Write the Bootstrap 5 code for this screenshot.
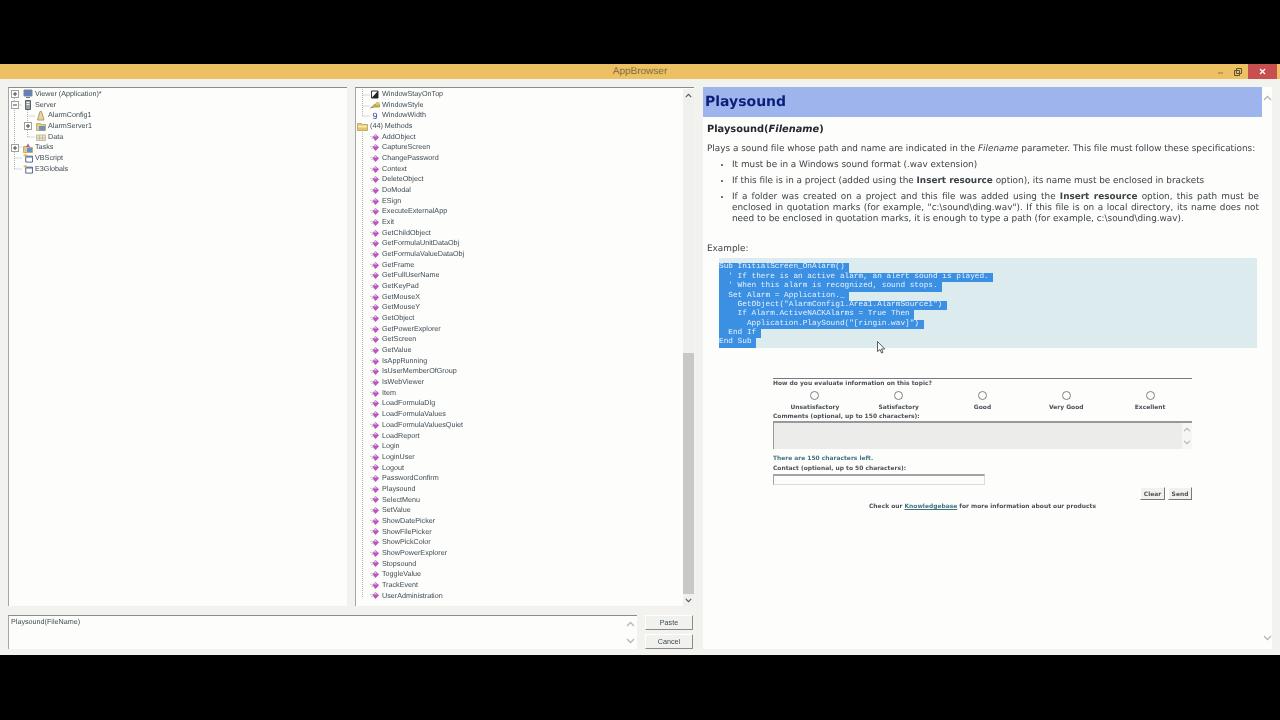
<!DOCTYPE html>
<html lang="en">
<head>
    <meta charset="UTF-8">
    <title>AppBrowser</title>
    <link href="https://cdn.jsdelivr.net/npm/bootstrap@5.3.0/dist/css/bootstrap.min.css" rel="stylesheet">
    <style>
        html, body { height: 720px; overflow: hidden; }
        body { background: #000; font-family: "Liberation Sans", sans-serif; text-rendering: geometricPrecision; }
        .cap-top { height: 64px; }
        .title-bar { height: 15px; background: #edc163; color: #7d6c42; font-size: 10px; line-height: 15px; }
        .title-text { left: 0; right: 0; top: 0; text-align: center; }
        .win-btn { width: 17px; height: 15px; }
        .win-close { width: 29px; height: 15px; margin-left: 2px; margin-right: 3px; background: #c84f4f; }
        .app-window { height: 576px; background: #f2f2ef; padding: 8px 8px 6px 8px; gap: 9px; filter: blur(.3px); }
        .col-browser { width: 686px; gap: 9px; }
        .tree-row-wrap { height: 519px; gap: 8px; }
        .sunken { background: #fdfdfb; border-top: 1px solid #8b8b8b; border-left: 1px solid #a5a5a5; }
        .tree-left { width: 339px; padding-top: 1px; }
        .tree-right { width: 339px; padding-top: 1px; }
        .tree-lines { left: 0; top: 0; }
        .node { height: 10.68px; font-size: 7.2px; line-height: 10.68px; color: #3f4c54; white-space: nowrap; }
        .node svg { flex: none; }
        .node-label { margin-left: 2px; }
        .ind-0 { padding-left: 14px; }
        .ind-1 { padding-left: 27px; }
        .mnode { padding-left: 14px; }
        .mfolder { padding-left: 1px; }
        .num-icon { width: 10px; flex: none; text-align: center; color: #2a3fb0; font-size: 9px; line-height: 10px; }
        .v-scroll { width: 11px; background: #f0f0ee; }
        .v-thumb { left: 0; right: 0; top: 264px; height: 241px; background: #c8c8c6; }
        .arrow-box { height: 12px; }
        .bottom-row { height: 34px; gap: 8px; }
        .formula-box { width: 629px; padding: 1px 2px; font-size: 7.2px; line-height: 10px; color: #3f4c54; }
        .side-btns { width: 48px; }
        .side-btn { height: 15px; width: 48px; padding: 0; font-size: 7.2px; line-height: 13px; color: #3f4c54; background: #f1f1ee; border: 0; border-right: 1px solid #8b8b8b; border-bottom: 1px solid #8b8b8b; border-top: 1px solid #fff; border-left: 1px solid #fff; border-radius: 0; }
        .help-pane { width: 569px; background: #fdfdfb; font-family: "DejaVu Sans", sans-serif; color: #3c4348; }
        .help-body { width: 559px; }
        .help-head { height: 30px; margin-bottom: 6px; padding-left: 2px; background: #9db4ec; color: #0c1f78; font-size: 14px; font-weight: 700; line-height: 30px; }
        .help-sub { margin: 0 0 8px 4px; font-size: 9.85px; font-weight: 700; line-height: 13px; color: #23282c; }
        .help-p { margin: 0 0 0 4px; font-size: 8.87px; line-height: 10.7px; width: 552px; }
        .help-list { margin: 0; padding: 5px 0 0 29px; width: 556px; font-size: 8.87px; line-height: 10.7px; }
        .help-list li { margin-bottom: 5.5px; }
        .just { text-align: justify; }
        .help-ex { margin: 19.5px 0 4px 4px; font-size: 8.87px; line-height: 10.7px; }
        .code-block { margin-left: 16px; width: 538px; height: 90px; padding-top: 5px; background: #dcebee; font-family: "DejaVu Sans Mono", monospace; line-height: 9.37px; }
        .code-line { display: block; white-space: pre; height: 9.37px; font-size: 7.75px; }
        .code-line span { display: inline-block; background: #3b90e4; color: #e8f2fb; }
        .fb-form { margin: 30px 0 0 70px; width: 419px; border-top: 1px solid #77797b; font-size: 5.95px; font-weight: 700; line-height: 9px; color: #4a5258; }
        .fb-cell { width: 84px; text-align: center; }
        .fb-radio { width: 9px; height: 9px; border: 1px solid #7d8286; border-radius: 50%; background: #fdfdfb; margin: 3px auto 3px; }
        .fb-area { height: 28px; margin-top: 0; background: #ecedeb; border-top: 2px solid #999; border-left: 1px solid #999; }
        .fb-area-scroll { width: 10px; background: #f6f6f4; }
        .fb-left { margin-top: 5px; color: #3f7480; }
        .fb-contact { margin-top: 1px; }
        .fb-input { width: 212px; height: 11px; margin-top: 1px; background: #fdfdfb; border-top: 2px solid #a3a3a3; border-left: 1px solid #a3a3a3; border-bottom: 1px solid #ddd; border-right: 1px solid #ddd; }
        .fb-actions { margin-top: 2px; }
        .fb-btn { height: 13px; padding: 0; font-size: 5.95px; font-weight: 700; line-height: 11px; color: #4a5258; background: #f1f1ee; border: 0; border-top: 1px solid #fff; border-left: 1px solid #fff; border-right: 1px solid #77797b; border-bottom: 1px solid #77797b; border-radius: 0; }
        .fb-btn-clear { width: 25px; }
        .fb-btn-send { width: 24px; margin-left: 3px; }
        .fb-foot { text-align: center; margin-top: 2px; }
        .fb-foot a { color: #3f7480; }
        .help-scroll { width: 10px; }
        .mouse-cursor { left: 174px; top: 254px; }
        .cap-bottom { height: 65px; }
    </style>
</head>
<body>
    <svg width="0" height="0" class="d-block">
        <defs>
            <symbol id="i-method" viewBox="0 0 10 9">
                <path d="M0 3.500h3M1 5.500h2" stroke="#d2d2d2"/>
                <path d="M5.500 1 9 4.200 5.500 8 2.500 4.200z" fill="#bb55be"/>
                <path d="M5.500 1.500 7 3.500H4z" fill="#eccdee"/>
            </symbol>
            <symbol id="i-folder" viewBox="0 0 11 9">
                <path d="M.5 1.500h4l1 1h5v6H.5z" fill="#e4c46a" stroke="#a58a3a" stroke-width=".6"/>
                <path d="M1 3.500h9v2H1z" fill="#f6e6ae"/>
            </symbol>
            <symbol id="i-plus" viewBox="0 0 8 8">
                <rect x=".5" y=".5" width="7" height="7" fill="#fdfdfb" stroke="#a0a0a0"/>
                <path d="M2 4h4M4 2v4" stroke="#444"/>
            </symbol>
            <symbol id="i-minus" viewBox="0 0 8 8">
                <rect x=".5" y=".5" width="7" height="7" fill="#fdfdfb" stroke="#a0a0a0"/>
                <path d="M2 4h4" stroke="#444"/>
            </symbol>
            <symbol id="i-win" viewBox="0 0 11 10">
                <path d="M3 3h7.500v6.500H3z" fill="#fff" stroke="#4a5a86"/>
                <path d="M3 3h7.500v1.500H3z" fill="#5a78b8"/>
                <path d="M0 2 3 .5 5 2 3 4z" fill="#e0b84c"/>
            </symbol>
            <symbol id="i-up" viewBox="0 0 9 6"><path d="M1 5 4.500 1.500 8 5" fill="none" stroke="#b4b7b7" stroke-width="1.300"/></symbol>
            <symbol id="i-down" viewBox="0 0 9 6"><path d="M1 1 4.500 4.500 8 1" fill="none" stroke="#b4b7b7" stroke-width="1.300"/></symbol>
            <symbol id="i-up-dark" viewBox="0 0 9 6"><path d="M1 5 4.500 1.500 8 5" fill="none" stroke="#555" stroke-width="1.300"/></symbol>
            <symbol id="i-down-dark" viewBox="0 0 9 6"><path d="M1 1 4.500 4.500 8 1" fill="none" stroke="#555" stroke-width="1.300"/></symbol>
        </defs>
    </svg>

    <div class="cap-top"></div>

    <div class="title-bar d-flex justify-content-end align-items-center position-relative">
        <div class="title-text position-absolute">AppBrowser</div>
        <div class="win-btn d-flex align-items-center justify-content-center">
            <svg width="7" height="7" viewBox="0 0 7 7"><path d="M1 5h5" stroke="#8c7a4e"/></svg>
        </div>
        <div class="win-btn d-flex align-items-center justify-content-center">
            <svg width="8" height="8" viewBox="0 0 8 8"><path d="M2.500.5h5v5h-5zM.5 2.500h5v5h-5z" fill="none" stroke="#5e5233"/></svg>
        </div>
        <div class="win-close d-flex align-items-center justify-content-center">
            <svg width="7" height="7" viewBox="0 0 7 7"><path d="M1 1l5 5M6 1 1 6" stroke="#fff" stroke-width="1.300"/></svg>
        </div>
    </div>

    <div class="app-window d-flex">
        <div class="col-browser d-flex flex-column">
            <div class="tree-row-wrap d-flex">
                <div class="tree-left sunken position-relative" id="leftTree">
                    <svg class="tree-lines position-absolute" width="60" height="90">
                        <path d="M5.500 6v75M5.500 17h8M5.500 59h8M5.500 70h8M5.500 81h8M18.500 22v27M18.500 28h8M18.500 49h8" stroke="#b4b4b4" stroke-dasharray="1 1" fill="none"/>
                    </svg>
                </div>
                <div class="tree-right sunken d-flex" id="methodPane">
                    <div class="flex-grow-1 position-relative" id="methodTree">
                        <svg class="tree-lines position-absolute" width="20" height="516">
                            <path d="M6.500 0v27M6.500 6h8M6.500 17h8M6.500 27h8M6.500 43v466" stroke="#b4b4b4" stroke-dasharray="1 1" fill="none"/>
                        </svg>
                    </div>
                    <div class="v-scroll position-relative d-flex flex-column justify-content-between">
                        <div class="v-thumb position-absolute"></div>
                        <div class="arrow-box d-flex align-items-center justify-content-center">
                            <svg width="7" height="5"><use href="#i-up-dark"/></svg>
                        </div>
                        <div class="arrow-box d-flex align-items-center justify-content-center">
                            <svg width="7" height="5"><use href="#i-down-dark"/></svg>
                        </div>
                    </div>
                </div>
            </div>
            <div class="bottom-row d-flex">
                <div class="formula-box sunken d-flex justify-content-between">
                    <div class="mt-0">Playsound(FileName)</div>
                    <div class="d-flex flex-column justify-content-between py-1">
                        <svg width="9" height="6"><use href="#i-up"/></svg>
                        <svg width="9" height="6"><use href="#i-down"/></svg>
                    </div>
                </div>
                <div class="side-btns d-flex flex-column justify-content-between">
                    <button type="button" class="btn side-btn">Paste</button>
                    <button type="button" class="btn side-btn">Cancel</button>
                </div>
            </div>
        </div>

        <div class="help-pane d-flex position-relative">
            <div class="help-body">
                <div class="help-head">Playsound</div>
                <h2 class="help-sub">Playsound(<em>Filename</em>)</h2>
                <p class="help-p">Plays a sound file whose path and name are indicated in the <em>Filename</em> parameter. This file must follow these specifications:</p>
                <ul class="help-list">
                    <li>It must be in a Windows sound format (.wav extension)</li>
                    <li>If this file is in a project (added using the <strong>Insert resource</strong> option), its name must be enclosed in brackets</li>
                    <li class="just">If a folder was created on a project and this file was added using the <strong>Insert resource</strong> option, this path must be enclosed in quotation marks (for example, "c:\sound\ding.wav"). If this file is on a local directory, its name does not need to be enclosed in quotation marks, it is enough to type a path (for example, c:\sound\ding.wav).</li>
                </ul>
                <p class="help-ex">Example:</p>
                <div class="code-block">
                    <code class="code-line text-reset"><span>Sub InitialScreen_OnAlarm() </span></code>
                    <code class="code-line text-reset"><span>  ' If there is an active alarm, an alert sound is played. </span></code>
                    <code class="code-line text-reset"><span>  ' When this alarm is recognized, sound stops. </span></code>
                    <code class="code-line text-reset"><span>  Set Alarm = Application._ </span></code>
                    <code class="code-line text-reset"><span>    GetObject("AlarmConfig1.Area1.AlarmSource1") </span></code>
                    <code class="code-line text-reset"><span>    If Alarm.ActiveNACKAlarms = True Then </span></code>
                    <code class="code-line text-reset"><span>      Application.PlaySound("[ringin.wav]") </span></code>
                    <code class="code-line text-reset"><span>  End If </span></code>
                    <code class="code-line text-reset"><span>End Sub </span></code>
                </div>
                <form class="fb-form">
                    <div>How do you evaluate information on this topic?</div>
                    <div class="d-flex">
                        <div class="fb-cell"><div class="fb-radio"></div>Unsatisfactory</div>
                        <div class="fb-cell"><div class="fb-radio"></div>Satisfactory</div>
                        <div class="fb-cell"><div class="fb-radio"></div>Good</div>
                        <div class="fb-cell"><div class="fb-radio"></div>Very Good</div>
                        <div class="fb-cell"><div class="fb-radio"></div>Excellent</div>
                    </div>
                    <div>Comments (optional, up to 150 characters):</div>
                    <div class="fb-area d-flex justify-content-end">
                        <div class="fb-area-scroll d-flex flex-column justify-content-between align-items-center py-1">
                            <svg width="8" height="5"><use href="#i-up"/></svg>
                            <svg width="8" height="5"><use href="#i-down"/></svg>
                        </div>
                    </div>
                    <div class="fb-left">There are 150 characters left.</div>
                    <div class="fb-contact">Contact (optional, up to 50 characters):</div>
                    <div class="fb-input"></div>
                    <div class="fb-actions d-flex justify-content-end">
                        <button type="button" class="btn fb-btn fb-btn-clear">Clear</button>
                        <button type="button" class="btn fb-btn fb-btn-send">Send</button>
                    </div>
                    <div class="fb-foot">Check our <a href="#">Knowledgebase</a> for more information about our products</div>
                </form>
            </div>
            <div class="help-scroll d-flex flex-column justify-content-between align-items-center py-2">
                <svg width="9" height="6"><use href="#i-up"/></svg>
                <svg width="9" height="6"><use href="#i-down"/></svg>
            </div>
            <svg class="mouse-cursor position-absolute" width="9" height="13" viewBox="0 0 9 13">
                <path d="M.5.5v10l2.500-2 1.500 3.500 1.500-.6-1.500-3.400h3.200z" fill="#fff" stroke="#333" stroke-width=".8"/>
            </svg>
        </div>
    </div>

    <div class="cap-bottom"></div>

    <script>
        // icons of the left tree
        const icons = {
            viewer: '<svg width="10" height="10" viewBox="0 0 10 10"><path d="M1 1h8v6H1z" fill="#5f7fc0" stroke="#7d8796"/><path d="M3 8.500h4" stroke="#777"/></svg>',
            server: '<svg width="10" height="10" viewBox="0 0 10 10"><path d="M2.500.5h5v9h-5z" fill="#9aa0a6" stroke="#5d6368"/><path d="M3.500 2.500h3M3.500 4.500h3" stroke="#eee"/></svg>',
            config: '<svg width="10" height="10" viewBox="0 0 10 10"><path d="M4 .5h1.500L8 9H1.500z" fill="#e9d6a8" stroke="#b09a66"/></svg>',
            alarm: '<svg width="10" height="10" viewBox="0 0 10 10"><path d="M.5 2.500h4l1 1h4v6h-9z" fill="#e6cc80" stroke="#a58a3a" stroke-width=".6"/><path d="M3 5h6v4.500H3z" fill="#6d90c8"/></svg>',
            data: '<svg width="10" height="10" viewBox="0 0 10 10"><path d="M.5 3h9v5.500h-9z" fill="#ece6cf" stroke="#c4bda0"/><path d="M3.500 3v5.500M6.500 3v5.500M.5 6h9" stroke="#c4bda0"/></svg>',
            tasks: '<svg width="10" height="10" viewBox="0 0 10 10"><path d="M.5 3.500h4l1 1h4v5h-9z" fill="#e6cc80" stroke="#a58a3a" stroke-width=".6"/><path d="M5 .5 7 4H3z" fill="#a55fb0"/><path d="M4 5h5v4H4z" fill="#6d90c8"/></svg>',
            win: '<svg width="10" height="10"><use href="#i-win"/></svg>'
        };

        const leftNodes = [
            { cls: 'ind-0', box: 'plus', icon: 'viewer', text: 'Viewer (Application)*' },
            { cls: 'ind-0', box: 'minus', icon: 'server', text: 'Server' },
            { cls: 'ind-1', icon: 'config', text: 'AlarmConfig1' },
            { cls: 'ind-1', box: 'plus', icon: 'alarm', text: 'AlarmServer1' },
            { cls: 'ind-1', icon: 'data', text: 'Data' },
            { cls: 'ind-0', box: 'plus', icon: 'tasks', text: 'Tasks' },
            { cls: 'ind-0', icon: 'win', text: 'VBScript' },
            { cls: 'ind-0', icon: 'win', text: 'E3Globals' }
        ];

        document.getElementById('leftTree').insertAdjacentHTML('beforeend', leftNodes.map(n => `
            <div class="node d-flex align-items-center position-relative ${n.cls}">
                ${n.box ? `<svg class="position-absolute" style="left:${n.cls === 'ind-0' ? 2 : 15}px" width="8" height="8"><use href="#i-${n.box}"/></svg>` : ''}
                ${icons[n.icon]}<span class="node-label">${n.text}</span>
            </div>`).join(''));

        const methods = ['AddObject', 'CaptureScreen', 'ChangePassword', 'Context', 'DeleteObject', 'DoModal', 'ESign',
            'ExecuteExternalApp', 'Exit', 'GetChildObject', 'GetFormulaUnitDataObj', 'GetFormulaValueDataObj', 'GetFrame',
            'GetFullUserName', 'GetKeyPad', 'GetMouseX', 'GetMouseY', 'GetObject', 'GetPowerExplorer', 'GetScreen', 'GetValue',
            'IsAppRunning', 'IsUserMemberOfGroup', 'IsWebViewer', 'Item', 'LoadFormulaDlg', 'LoadFormulaValues',
            'LoadFormulaValuesQuiet', 'LoadReport', 'Login', 'LoginUser', 'Logout', 'PasswordConfirm', 'Playsound',
            'SelectMenu', 'SetValue', 'ShowDatePicker', 'ShowFilePicker', 'ShowPickColor', 'ShowPowerExplorer', 'Stopsound',
            'ToggleValue', 'TrackEvent', 'UserAdministration'];

        const topRows = [
            ['<svg width="10" height="9" viewBox="0 0 10 9"><path d="M1.500 1h6.500v7H1.500z" fill="#fff" stroke="#333"/><path d="M1.500 8 8 1v7z" fill="#222"/></svg>', 'WindowStayOnTop'],
            ['<svg width="10" height="9" viewBox="0 0 10 9"><path d="M.5 7 5 3h4.500v3H5z" fill="#c9b24e" stroke="#8f7e30" stroke-width=".6"/><path d="M6 1h3.500v3H6z" fill="#d9c770"/></svg>', 'WindowStyle'],
            ['<span class="num-icon">9</span>', 'WindowWidth']
        ];

        document.getElementById('methodTree').insertAdjacentHTML('beforeend',
            topRows.map(r => `<div class="node d-flex align-items-center mnode">${r[0]}<span class="node-label">${r[1]}</span></div>`).join('') +
            `<div class="node d-flex align-items-center mfolder"><svg width="11" height="9"><use href="#i-folder"/></svg><span class="node-label">(44) Methods</span></div>` +
            methods.map(m => `<div class="node d-flex align-items-center mnode"><svg width="10" height="9"><use href="#i-method"/></svg><span class="node-label">${m}</span></div>`).join(''));
    </script>
    <script src="https://cdn.jsdelivr.net/npm/bootstrap@5.3.0/dist/js/bootstrap.bundle.min.js"></script>
</body>
</html>
